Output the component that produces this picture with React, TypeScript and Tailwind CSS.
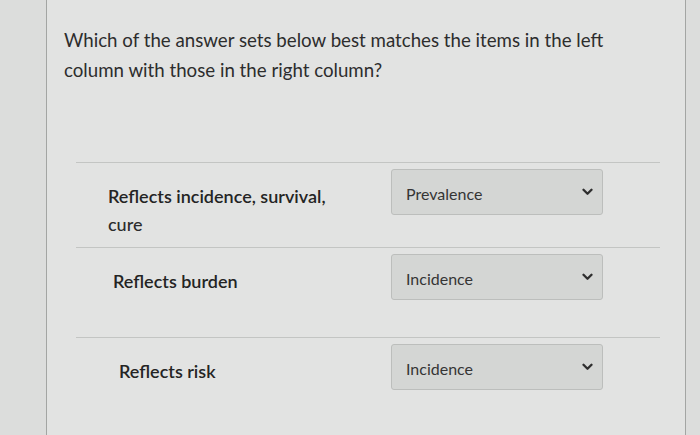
import React from 'react';

type Row = {
  label: string[];
  value: string;
  labelPad: string;
  height: string;
};

const rows: Row[] = [
  { label: ['Reflects incidence, survival,', 'cure'], value: 'Prevalence', labelPad: 'pl-[32px]', height: 'h-[85px]' },
  { label: ['Reflects burden'], value: 'Incidence', labelPad: 'pl-[37px]', height: 'h-[90px]' },
  { label: ['Reflects risk'], value: 'Incidence', labelPad: 'pl-[43px]', height: 'h-[98px]' },
];

function Chevron() {
  return (
    <svg width="11" height="8" viewBox="0 0 11 8" fill="none">
      <path d="M1.5 1.8 L5.5 5.8 L9.5 1.8" stroke="#2e2e2e" strokeWidth="2.3" strokeLinecap="round" strokeLinejoin="round" />
    </svg>
  );
}

function SelectBox({ value }: { value: string }) {
  return (
    <div className="flex h-[46px] w-[212px] items-center justify-between rounded-[3px] border border-[#bcbebc] bg-[#d4d6d4] pl-[14px] pr-[9px]">
      <span className="pt-[3px] text-[16px] text-[#353535]">{value}</span>
      <Chevron />
    </div>
  );
}

export default function App() {
  return (
    <div
      className="flex h-[435px] w-[700px] overflow-hidden bg-[#dcdddc] pl-[46px] pr-[14px]"
      style={{ fontFamily: 'Lato, "Open Sans", sans-serif' }}
    >
      <div className="flex flex-1 flex-col border-l border-r border-[#a3a5a3] bg-[#e2e3e2]">
        <div className="pl-[17px] pt-[25px] text-[18.7px] leading-[30px] text-[#2d2d2d]">
          <p>Which of the answer sets below best matches the items in the left</p>
          <p>column with those in the right column?</p>
        </div>

        <div className="mt-[77px] flex flex-col pl-[29px] pr-[25px]">
          {rows.map((row, i) => (
            <div key={i} className={`flex items-start border-t border-[#c3c5c3] pt-[6px] ${row.height}`}>
              <div className={`w-[315px] pt-[13px] text-[18px] leading-[28px] font-semibold text-[#242424] ${row.labelPad}`}>
                {row.label.map((line, j) => (
                  <div key={j} className={j > 0 ? 'font-medium text-[#2c2c2c]' : ''}>
                    {line}
                  </div>
                ))}
              </div>
              <SelectBox value={row.value} />
            </div>
          ))}
        </div>
      </div>
    </div>
  );
}
